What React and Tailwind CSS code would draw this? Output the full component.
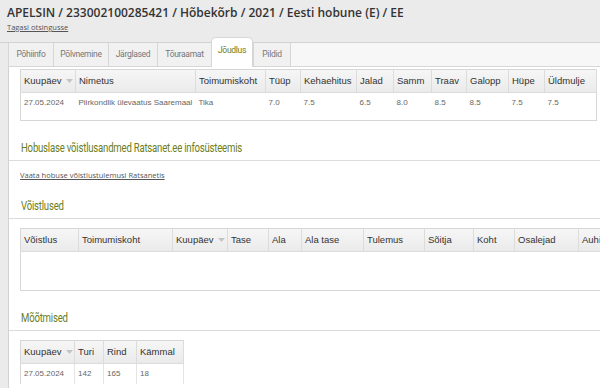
const TABS = ["Põhiinfo", "Põlvnemine", "Järglased", "Tõuraamat", "Jõudlus", "Pildid"];
const TAB_W = [45, 55, 49, 54, 42, 37];

const JOUDLUS_COLS = [
  ["Kuupäev", 55, true], ["Nimetus", 120], ["Toimumiskoht", 70], ["Tüüp", 35], ["Kehaehitus", 56],
  ["Jalad", 37], ["Samm", 38], ["Traav", 35], ["Galopp", 42], ["Hüpe", 36], ["Üldmulje", 52],
];
const JOUDLUS_ROW = ["27.05.2024", "Piirkondlik ülevaatus Saaremaal", "Tika", "7.0", "7.5", "6.5", "8.0", "8.5", "8.5", "7.5", "7.5"];

const VOISTLUS_COLS = [
  ["Võistlus", 58], ["Toimumiskoht", 94], ["Kuupäev", 55, true], ["Tase", 41], ["Ala", 33],
  ["Ala tase", 62], ["Tulemus", 61], ["Sõitja", 49], ["Koht", 41], ["Osalejad", 64], ["Auhinnaraha", 70],
];

const MOOT_COLS = [["Kuupäev", 54, true], ["Turi", 29], ["Rind", 33], ["Kämmal", 47]];
const MOOT_ROW = ["27.05.2024", "142", "165", "18"];

const SortArrow = () => (
  <svg width="7" height="4" viewBox="0 0 7 4" className="ml-[4px] inline-block">
    <path d="M0 0 L7 0 L3.5 4 Z" fill="#c4c4c4" />
  </svg>
);

const Grid = ({ cols, row, rowH, width, noBottom }) => (
  <table
    className={`table-fixed border-collapse border-x border-t border-[#d6d6d6] ${noBottom ? "" : "border-b"}`}
    style={{ width }}
  >
    <colgroup>
      {cols.map(([label, w]) => (
        <col key={label} style={{ width: w }} />
      ))}
    </colgroup>
    <thead>
      <tr className="h-[23px] bg-gradient-to-b from-[#f6f6f6] to-[#eaeaea]">
        {cols.map(([label, , sort]) => (
          <th
            key={label}
            className="border-r border-b border-[#dcdcdc] px-[3px] text-left text-[9.5px] font-normal text-[#333] whitespace-nowrap overflow-hidden"
          >
            {label}
            {sort && <SortArrow />}
          </th>
        ))}
      </tr>
    </thead>
    <tbody>
      <tr style={{ height: rowH }}>
        {cols.map(([label], i) => (
          <td
            key={label}
            className={`px-[3px] pt-[4px] align-top text-[8px] text-[#666] whitespace-nowrap overflow-hidden ${noBottom ? "border-r border-[#e4e4e4]" : ""}`}
          >
            {row ? row[i] : ""}
          </td>
        ))}
      </tr>
    </tbody>
  </table>
);

const Heading = ({ children, h }) => (
  <div className="flex items-end border-b border-[#dcdcdc] pl-[12px] pb-[6px]" style={{ height: h }}>
    <span className="origin-left scale-x-[0.71] whitespace-nowrap text-[13.5px] leading-none tracking-[-0.3px] text-[#6c7d22] font-['Roboto',sans-serif]">
      {children}
    </span>
  </div>
);

export default function App() {
  return (
    <div className="w-[600px] h-[388px] overflow-hidden bg-[#ebebeb] font-['Liberation_Sans',sans-serif]">
      {/* Header */}
      <div className="h-[43px] border-b border-[#d2d2d2] px-[7px] pt-[5px]">
        <h1 className="text-[12px] leading-[16px] font-semibold text-[#333] font-['Open_Sans',sans-serif] whitespace-nowrap">
          APELSIN / 233002100285421 / Hõbekõrb / 2021 / Eesti hobune (E) / EE
        </h1>
        <a className="mt-[1px] block text-[7.5px] leading-[10px] text-[#555] underline font-['Open_Sans',sans-serif]">
          Tagasi otsingusse
        </a>
      </div>

      <div className="flex">
        <div className="w-[8px] shrink-0" />
        <div className="flex-1 -mt-[6px]">
          {/* Tabs */}
          <div className="flex h-[30px] items-end">
            <div className="flex h-[24px] flex-1 items-stretch border-b border-[#d6d6d6] bg-[#f7f7f7]">
              {TABS.map((t, i) =>
                t === "Jõudlus" ? (
                  <div
                    key={t}
                    style={{ width: TAB_W[i] }}
                    className="-mt-[6px] -mb-[1px] flex items-center justify-center rounded-t-[5px] border-x border-t border-[#d6d6d6] bg-white pb-[4px] text-[8.5px] tracking-[-0.3px] text-[#6c7d22] font-['Roboto',sans-serif]"
                  >
                    {t}
                  </div>
                ) : (
                  <div
                    key={t}
                    style={{ width: TAB_W[i] }}
                    className="flex items-center justify-center border-l border-[#d6d6d6] bg-[#f1f1f1] text-[8.5px] tracking-[-0.3px] text-[#777] font-['Roboto',sans-serif]"
                  >
                    {t}
                  </div>
                )
              )}
              <div className="w-[2px] border-l border-[#d6d6d6]" />
            </div>
          </div>

          {/* Panel */}
          <div className="h-[323px] overflow-hidden rounded-bl-[4px] border-l border-b border-[#d2d2d2] bg-white">
            <div className="pl-[11px] pt-[2px]">
              <Grid cols={JOUDLUS_COLS} row={JOUDLUS_ROW} rowH={28} width={576} />
            </div>

            <Heading h={40}>Hobuslase võistlusandmed Ratsanet.ee infosüsteemis</Heading>
            <div className="h-[20px] pl-[11px] pt-[9px]">
              <a className="block text-[7.5px] leading-[10px] text-[#555] underline font-['Open_Sans',sans-serif]">
                Vaata hobuse võistlustulemusi Ratsanetis
              </a>
            </div>
            <Heading h={38}>Võistlused</Heading>
            <div className="pl-[11px] pt-[9px]">
              <Grid cols={VOISTLUS_COLS} rowH={39} width={628} />
            </div>

            <Heading h={40}>Mõõtmised</Heading>
            <div className="pl-[11px] pt-[9px]">
              <Grid cols={MOOT_COLS} row={MOOT_ROW} rowH={20} width={163} noBottom />
            </div>
          </div>
        </div>
      </div>
    </div>
  );
}
